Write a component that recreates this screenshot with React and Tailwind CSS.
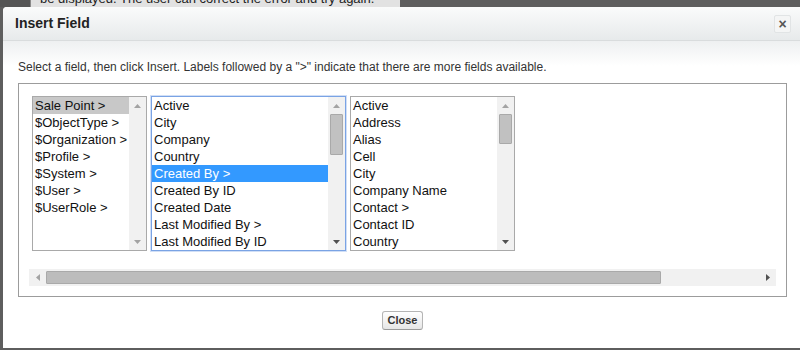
import React from "react";

const Tri = ({ dir, color }) => {
  const paths = {
    up: "M3.5 0L7 4H0z",
    down: "M0 0H7L3.5 4z",
    left: "M4 0V7L0 3.5z",
    right: "M0 0L4 3.5L0 7z",
  };
  const vertical = dir === "up" || dir === "down";
  return (
    <svg width={vertical ? 7 : 4} height={vertical ? 4 : 7} viewBox={vertical ? "0 0 7 4" : "0 0 4 7"}>
      <path d={paths[dir]} fill={color} />
    </svg>
  );
};

const VScroll = ({ thumb, upColor, downColor }) => (
  <div className="flex w-[17px] shrink-0 flex-col bg-[#f1f1f1]">
    <div className="flex h-[17px] items-center justify-center">
      <Tri dir="up" color={upColor} />
    </div>
    <div className="flex-1">
      {thumb ? (
        <div className={`mx-[2px] rounded-[1px] border border-[#a9a9a9] bg-[#c1c1c1] ${thumb}`} />
      ) : null}
    </div>
    <div className="flex h-[17px] items-center justify-center">
      <Tri dir="down" color={downColor} />
    </div>
  </div>
);

const ListBox = ({ items, width, selected, selClass, focused, thumb, upColor, downColor }) => (
  <div
    className={`flex h-[155px] shrink-0 border ${width} ${
      focused
        ? "border-[#7aa3e4] shadow-[0_0_0_1px_rgba(122,163,228,0.35)]"
        : "border-[#a9a9a9]"
    } bg-white`}
  >
    <div className="flex-1 overflow-hidden">
      {items.map((it, i) => (
        <div
          key={it}
          className={`h-[17px] whitespace-nowrap px-[2px] text-[13px] leading-[17px] ${
            i === selected ? selClass : "text-[#111]"
          }`}
        >
          {it}
        </div>
      ))}
    </div>
    <VScroll thumb={thumb} upColor={upColor} downColor={downColor} />
  </div>
);

export default function App() {
  return (
    <div
      className="relative h-[350px] w-[800px] overflow-hidden bg-[#5e5e5e]"
      style={{ fontFamily: '"Liberation Sans", Arial, sans-serif' }}
    >
      {/* page beneath the dialog */}
      <div className="flex h-[7px] overflow-hidden">
        <div className="w-[30px] bg-[#555]" />
        <div className="w-[370px] overflow-hidden border-l border-[#8a8a8a] bg-[#e2e2e2] pl-[9px]">
          <div className="-mt-[9px] whitespace-nowrap text-[13px] leading-[16px] text-[#222]">
            be displayed. The user can correct the error and try again.
          </div>
        </div>
      </div>

      {/* dialog */}
      <div className="ml-[3px] flex h-[341px] w-[800px] flex-col rounded-[4px] bg-white">
        <div className="flex h-[33px] items-center justify-between rounded-t-[4px] bg-gradient-to-b from-[#fafbfb] to-[#e7eaeb] pl-[12px] pr-[12px]">
          <div className="text-[14px] font-bold text-[#222]">Insert Field</div>
          <div className="flex h-[18px] w-[17px] items-center justify-center rounded-[2px] border border-[#e1e4e5] bg-[#f4f5f5] text-[14px] font-bold leading-none text-[#555]">
            ×
          </div>
        </div>
        <div className="h-px bg-[#d9dcdd]" />
        <div className="flex flex-1 flex-col bg-gradient-to-b from-[#eef0f1] to-white to-[25px] pl-[15px] pt-[19px]">
          <div className="h-[14px] whitespace-nowrap text-[12px] leading-[14px] text-[#333]">
            Select a field, then click Insert. Labels followed by a "&gt;" indicate that there are more fields available.
          </div>
          <div className="mt-[9px] flex h-[214px] w-[769px] flex-col border border-[#9c9c9c] bg-white px-[10px] pb-[10px] pt-[12px]">
            <div className="flex gap-[4px] pl-[3px]">
              <ListBox
                width="w-[115px]"
                items={["Sale Point >", "$ObjectType >", "$Organization >", "$Profile >", "$System >", "$User >", "$UserRole >"]}
                selected={0}
                selClass="bg-[#c8c8c8] text-[#111]"
                upColor="#a3a3a3"
                downColor="#a3a3a3"
              />
              <ListBox
                width="w-[195px]"
                focused
                items={["Active", "City", "Company", "Country", "Created By >", "Created By ID", "Created Date", "Last Modified By >", "Last Modified By ID"]}
                selected={4}
                selClass="bg-[#3399ff] text-white"
                thumb="h-[41px]"
                upColor="#a3a3a3"
                downColor="#505050"
              />
              <ListBox
                width="w-[165px]"
                items={["Active", "Address", "Alias", "Cell", "City", "Company Name", "Contact >", "Contact ID", "Country"]}
                selected={-1}
                selClass=""
                thumb="h-[30px]"
                upColor="#a3a3a3"
                downColor="#505050"
              />
            </div>
            <div className="mt-[18px] flex h-[17px] bg-[#f1f1f1]">
              <div className="flex w-[17px] items-center justify-center">
                <Tri dir="left" color="#a3a3a3" />
              </div>
              <div className="flex flex-1 items-center">
                <div className="h-[13px] w-[615px] rounded-[1px] border border-[#a9a9a9] bg-[#bcbcbc]" />
              </div>
              <div className="flex w-[17px] items-center justify-center">
                <Tri dir="right" color="#505050" />
              </div>
            </div>
          </div>
          <div className="mt-[14px] flex w-[769px] justify-center">
            <div className="flex h-[19px] items-center rounded-[3px] border border-[#b5b5b5] border-b-[#9a9a9a] bg-gradient-to-b from-white to-[#e6e6e6] px-[5px] text-[11px] font-bold text-[#333]">
              Close
            </div>
          </div>
        </div>
      </div>
    </div>
  );
}
